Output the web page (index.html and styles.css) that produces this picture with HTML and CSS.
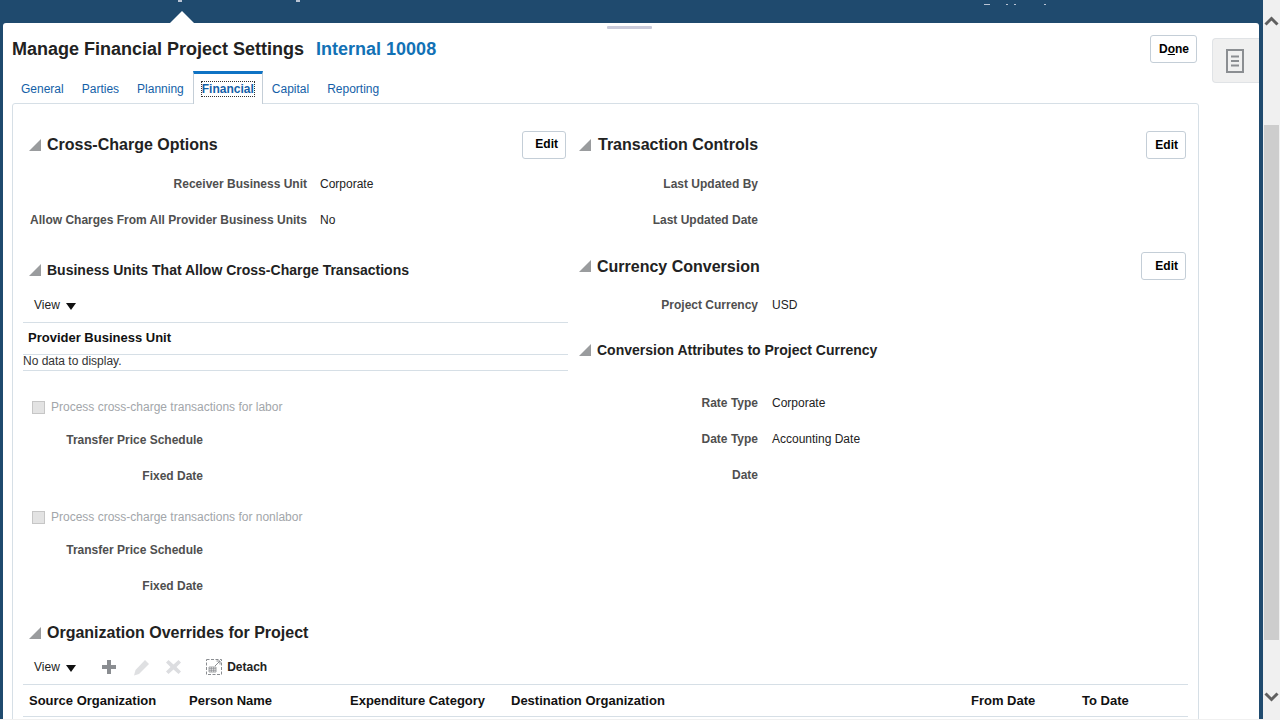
FILE: index.html
```html
<!DOCTYPE html>
<html>
<head>
    <title>Manage Financial Project Settings</title>
    <link rel="stylesheet" href="styles.css">
</head>
<body>
    <div class="window">
        <div class="main">
            <div class="topbar">
                <span class="mark mark-nav1"></span>
                <span class="mark mark-nav2"></span>
                <div class="user-marks">
                    <span class="mark mark-u1"></span>
                    <span class="mark mark-u2"></span>
                    <span class="mark mark-u3"></span>
                    <span class="mark mark-u4"></span>
                </div>
                <span class="notch"></span>
            </div>
            <div class="card">
                <span class="handle"></span>
                <div class="drawer-tab">
                    <svg width="18" height="24" viewBox="0 0 18 24">
                        <rect x="1" y="1" width="16" height="22" fill="none" stroke="#8b8e92" stroke-width="2"/>
                        <path d="M5 7.500h8M5 12h8M5 16.500h8" stroke="#8b8e92" stroke-width="2"/>
                    </svg>
                </div>

                <div class="title-row">
                    <h1>Manage Financial Project Settings</h1>
                    <span class="subtitle">Internal 10008</span>
                    <button class="btn btn-done">D<u>o</u>ne</button>
                </div>

                <div class="tabs">
                    <a class="tab">General</a>
                    <a class="tab">Parties</a>
                    <a class="tab">Planning</a>
                    <a class="tab active"><span class="focus">Financial</span></a>
                    <a class="tab">Capital</a>
                    <a class="tab">Reporting</a>
                </div>

                <div class="panel">
                    <div class="columns">
                        <div class="col-left">
                            <div class="section-head">
                                <svg class="arrow" width="12" height="12" viewBox="0 0 12 12"><polygon points="12,0 12,12 0,12"/></svg>
                                <h2>Cross-Charge Options</h2>
                                <button class="btn btn-cross">Edit</button>
                            </div>
                            <div class="rows rows-first">
                                <div class="row"><label>Receiver Business Unit</label><span>Corporate</span></div>
                                <div class="row"><label>Allow Charges From All Provider Business Units</label><span>No</span></div>
                            </div>

                            <div class="sub-head">
                                <svg class="arrow" width="12" height="12" viewBox="0 0 12 12"><polygon points="12,0 12,12 0,12"/></svg>
                                <h3>Business Units That Allow Cross-Charge Transactions</h3>
                            </div>
                            <div class="toolbar toolbar-units">
                                <span class="view">View <i class="caret"></i></span>
                            </div>
                            <div class="table-head single">Provider Business Unit</div>
                            <div class="no-data">No data to display.</div>

                            <div class="check-row check-labor"><span class="checkbox"></span>Process cross-charge transactions for labor</div>
                            <div class="row row-indent"><label>Transfer Price Schedule</label></div>
                            <div class="row row-indent"><label>Fixed Date</label></div>
                            <div class="check-row check-nonlabor"><span class="checkbox"></span>Process cross-charge transactions for nonlabor</div>
                            <div class="row row-indent"><label>Transfer Price Schedule</label></div>
                            <div class="row row-indent"><label>Fixed Date</label></div>
                        </div>

                        <div class="col-right">
                            <div class="section-head">
                                <svg class="arrow" width="12" height="12" viewBox="0 0 12 12"><polygon points="12,0 12,12 0,12"/></svg>
                                <h2>Transaction Controls</h2>
                                <button class="btn btn-controls">Edit</button>
                            </div>
                            <div class="rows rows-first">
                                <div class="row"><label>Last Updated By</label></div>
                                <div class="row"><label>Last Updated Date</label></div>
                            </div>

                            <div class="section-head section-currency">
                                <svg class="arrow" width="12" height="12" viewBox="0 0 12 12"><polygon points="12,0 12,12 0,12"/></svg>
                                <h2>Currency Conversion</h2>
                                <button class="btn btn-currency">Edit</button>
                            </div>
                            <div class="row row-currency"><label>Project Currency</label><span>USD</span></div>

                            <div class="sub-head sub-conversion">
                                <svg class="arrow" width="12" height="12" viewBox="0 0 12 12"><polygon points="12,0 12,12 0,12"/></svg>
                                <h3>Conversion Attributes to Project Currency</h3>
                            </div>
                            <div class="rows rows-rate">
                                <div class="row"><label>Rate Type</label><span>Corporate</span></div>
                                <div class="row"><label>Date Type</label><span>Accounting Date</span></div>
                                <div class="row"><label>Date</label></div>
                            </div>
                        </div>
                    </div>

                    <div class="overrides">
                        <div class="section-head section-overrides">
                            <svg class="arrow" width="12" height="12" viewBox="0 0 12 12"><polygon points="12,0 12,12 0,12"/></svg>
                            <h2>Organization Overrides for Project</h2>
                        </div>
                        <div class="toolbar toolbar-overrides">
                            <span class="view">View <i class="caret"></i></span>
                            <svg class="tool-add" width="14" height="14" viewBox="0 0 14 14"><path d="M5 0h4v5h5v4H9v5H5V9H0V5h5z" fill="#8a8d91"/></svg>
                            <svg class="tool-edit" width="17" height="17" viewBox="0 0 17 17"><path d="M12 1l4 4L6 15l-5 1.500L2.500 11z" fill="#dfe0e2"/></svg>
                            <svg class="tool-del" width="15" height="14" viewBox="0 0 15 14"><path d="M0 2.500L2.500 0l5 4.500 5-4.500L15 2.500 10.500 7l4.500 4.500-2.500 2.500-5-4.500-5 4.500L0 11.500 4.500 7z" fill="#dcdde0"/></svg>
                            <svg class="tool-detach" width="16" height="16" viewBox="0 0 16 16">
                                <rect x="0.500" y="0.500" width="15" height="15" fill="none" stroke="#8a8d91" stroke-dasharray="3 1.500"/>
                                <path d="M9 7l5-5M10.500 2H14v3.500" fill="none" stroke="#8a8d91"/>
                                <path d="M3 8h7v5H3zM3 9.700h7M3 11.300h7M5.300 8v5M7.700 8v5" fill="none" stroke="#8a8d91" stroke-width="0.800"/>
                            </svg>
                            <span class="detach-label">Detach</span>
                        </div>
                        <div class="table-head multi">
                            <span>Source Organization</span>
                            <span>Person Name</span>
                            <span>Expenditure Category</span>
                            <span>Destination Organization</span>
                            <span>From Date</span>
                            <span>To Date</span>
                        </div>
                    </div>
                </div>
            </div>
        </div>

        <div class="scrollbar">
            <svg width="17" height="10" viewBox="0 0 17 10"><path d="M2.500 8.500l6-6 6 6" fill="none" stroke="#606060" stroke-width="3"/></svg>
            <div class="track"><div class="thumb"></div></div>
            <svg width="17" height="10" viewBox="0 0 17 10"><path d="M2.500 1.500l6 6 6-6" fill="none" stroke="#606060" stroke-width="3"/></svg>
        </div>
    </div>
</body>
</html>
```

FILE: styles.css
```css
* {
    box-sizing: border-box;
}

html, body {
    margin: 0;
    height: 100%;
    overflow: hidden;
}

body {
    font-family: "Liberation Sans", Arial, sans-serif;
    font-size: 12px;
    color: #222;
    background-color: #f0f0f0;
}

.window {
    display: flex;
    height: 720px;
}

/* main area */
.main {
    width: 1263px;
    height: 719px;
    padding: 0 4px 0 3px;
    background-color: #1f4a6e;
    overflow: hidden;
}

.topbar {
    position: relative;
    height: 23px;
    margin-left: -3px;
}

.mark {
    position: absolute;
    display: block;
    background-color: #b9c4d4;
}

.mark-nav1 { left: 178px; top: 0; width: 4px; height: 2px; }
.mark-nav2 { left: 296px; top: 0; width: 4px; height: 2px; }
.mark-u1 { left: 984px; top: 4px; width: 6px; height: 1px; }
.mark-u2 { left: 1006px; top: 4px; width: 2px; height: 1px; }
.mark-u3 { left: 1014px; top: 4px; width: 2px; height: 1px; }
.mark-u4 { left: 1044px; top: 4px; width: 2px; height: 1px; }

.notch {
    position: absolute;
    left: 170px;
    top: 11px;
    width: 0;
    height: 0;
    border-left: 12px solid transparent;
    border-right: 12px solid transparent;
    border-bottom: 12px solid #fff;
}

.card {
    position: relative;
    height: 696px;
    padding: 12px 60px 0 9px;
    background: #fff;
    border-radius: 3px 3px 0 0;
    overflow: hidden;
}

.handle {
    position: absolute;
    left: 604px;
    top: 3px;
    width: 45px;
    height: 3px;
    background-color: #c9cbdb;
    border-radius: 1px;
}

.drawer-tab {
    position: absolute;
    right: 0;
    top: 15px;
    width: 47px;
    height: 45px;
    padding: 10px 0 0 13px;
    background-color: #f0f0f0;
    border: 1px solid #e0e3e6;
    border-right: none;
    border-radius: 4px 0 0 4px;
}

.title-row {
    display: flex;
    align-items: center;
    height: 28px;
    padding-right: 2px;
    margin-bottom: 8px;
}

h1 {
    margin: 0;
    font-size: 18px;
    font-weight: bold;
    color: #222;
}

.subtitle {
    margin-left: 12px;
    font-size: 18px;
    font-weight: bold;
    color: #1271b5;
}

.btn {
    margin-left: auto;
    height: 28px;
    padding: 0 8px 2px 9px;
    font-family: inherit;
    font-size: 12px;
    font-weight: bold;
    color: #000;
    background: #fff;
    border: 1px solid #c4ced7;
    border-radius: 3px;
}

.btn-done {
    padding: 0 7px 0 8px;
}

.btn-cross {
    padding: 0 7px 3px 12px;
}

.btn-controls {
    padding: 0 7px 1px 8px;
}

.btn-currency {
    padding: 0 7px 0 13px;
}

/* tabs */
.tabs {
    display: flex;
    height: 32px;
}

.tab {
    padding: 11px 9px 0;
    color: #145fa8;
}

.tab.active {
    padding: 8px 8px 0;
    background: #fff;
    border-top: 3px solid #0f73c4;
    border-left: 1px solid #c4ced7;
    border-right: 1px solid #c4ced7;
    position: relative;
    z-index: 1;
    height: 33px;
}

.focus {
    display: inline-block;
    font-weight: bold;
    font-size: 12px;
    color: #145fa8;
    outline: 1px dotted #333;
}

.panel {
    height: 640px;
    padding: 0 10px;
    border: 1px solid #d6dfe6;
    border-radius: 3px;
}

.columns {
    display: grid;
    grid-template-columns: 545px 1fr;
    column-gap: 11px;
    padding-top: 27px;
}

.col-right {
    padding-right: 2px;
}

/* headings */
.section-head {
    display: flex;
    align-items: center;
    height: 28px;
    padding: 0 2px 0 6px;
}

.col-right .section-head {
    padding: 0;
}

.arrow {
    flex: none;
    margin-top: -1px;
    fill: #9a9c9e;
}

h2 {
    margin: 0 0 0 6px;
    font-size: 16px;
    font-weight: bold;
    color: #222;
}

.col-right h2 {
    margin-left: 7px;
}

.col-right .section-currency h2,
.sub-conversion h3 {
    margin-left: 6px;
}

.col-right .section-currency h2 {
    padding-top: 1px;
}

.sub-head {
    display: flex;
    align-items: center;
    height: 20px;
    padding-left: 6px;
}

h3 {
    margin: 0 0 0 6px;
    font-size: 14px;
    font-weight: bold;
    color: #222;
}

/* form rows */
.rows-first {
    margin-top: 7px;
}

.row {
    display: grid;
    grid-template-columns: 284px 1fr;
    column-gap: 13px;
    align-items: center;
    height: 36px;
}

.col-right .row {
    grid-template-columns: 179px 1fr;
    column-gap: 14px;
}

.row label {
    text-align: right;
    font-weight: bold;
    color: #4f4f4f;
}

.row-indent {
    grid-template-columns: 180px 1fr;
}

.col-left .sub-head {
    margin-top: 22px;
}

.section-currency {
    margin-top: 14px;
}

.row-currency {
    margin-top: 7px;
}

.sub-conversion {
    margin-top: 17px;
}

.col-right .sub-conversion {
    padding-left: 0;
}

.rows-rate {
    margin-top: 25px;
}

/* toolbars and tables */
.toolbar {
    display: flex;
    align-items: center;
    height: 24px;
    padding-left: 11px;
}

.toolbar-units {
    margin-top: 13px;
    margin-bottom: 5px;
}

.view {
    color: #222;
}

.caret {
    display: inline-block;
    width: 0;
    height: 0;
    margin-left: 3px;
    border-left: 5px solid transparent;
    border-right: 5px solid transparent;
    border-top: 7px solid #111;
    vertical-align: -1px;
}

.table-head {
    font-size: 13px;
    font-weight: bold;
    color: #111;
    border-top: 1px solid #d6dfe6;
    border-bottom: 1px solid #d6dfe6;
}

.table-head.single {
    height: 33px;
    padding: 7px 0 0 5px;
}

.no-data {
    height: 16px;
    border-bottom: 1px solid #d6dfe6;
    line-height: 12px;
    color: #333;
}

.check-row {
    display: flex;
    align-items: center;
    height: 24px;
    padding-left: 9px;
    color: #a2a6aa;
}

.check-labor {
    margin-top: 24px;
    margin-bottom: 3px;
}

.check-nonlabor {
    margin-top: 11px;
    margin-bottom: 3px;
}

.checkbox {
    width: 13px;
    height: 13px;
    margin-right: 6px;
    background-color: #e3e3e3;
    border: 1px solid #c6c6c6;
}

.section-overrides {
    margin-top: 15px;
}

.toolbar-overrides {
    margin-top: 8px;
}

.tool-add { margin-left: 26px; }
.tool-edit { margin-left: 17px; }
.tool-del { margin-left: 16px; }
.tool-detach { margin-left: 25px; }

.detach-label {
    margin-left: 5px;
    font-weight: bold;
    color: #222;
}

.table-head.multi {
    display: grid;
    grid-template-columns: 160px 161px 161px 460px 111px 1fr;
    align-items: center;
    height: 33px;
    margin-top: 5px;
}

.table-head.multi span {
    padding-left: 6px;
}

/* browser scrollbar */
.scrollbar {
    display: flex;
    flex-direction: column;
    width: 17px;
    height: 720px;
    padding-top: 16px;
    background-color: #f0f0f0;
}

.track {
    height: 666px;
    padding: 99px 1px 0;
}

.thumb {
    height: 515px;
    background-color: #cdcdcd;
}
```
